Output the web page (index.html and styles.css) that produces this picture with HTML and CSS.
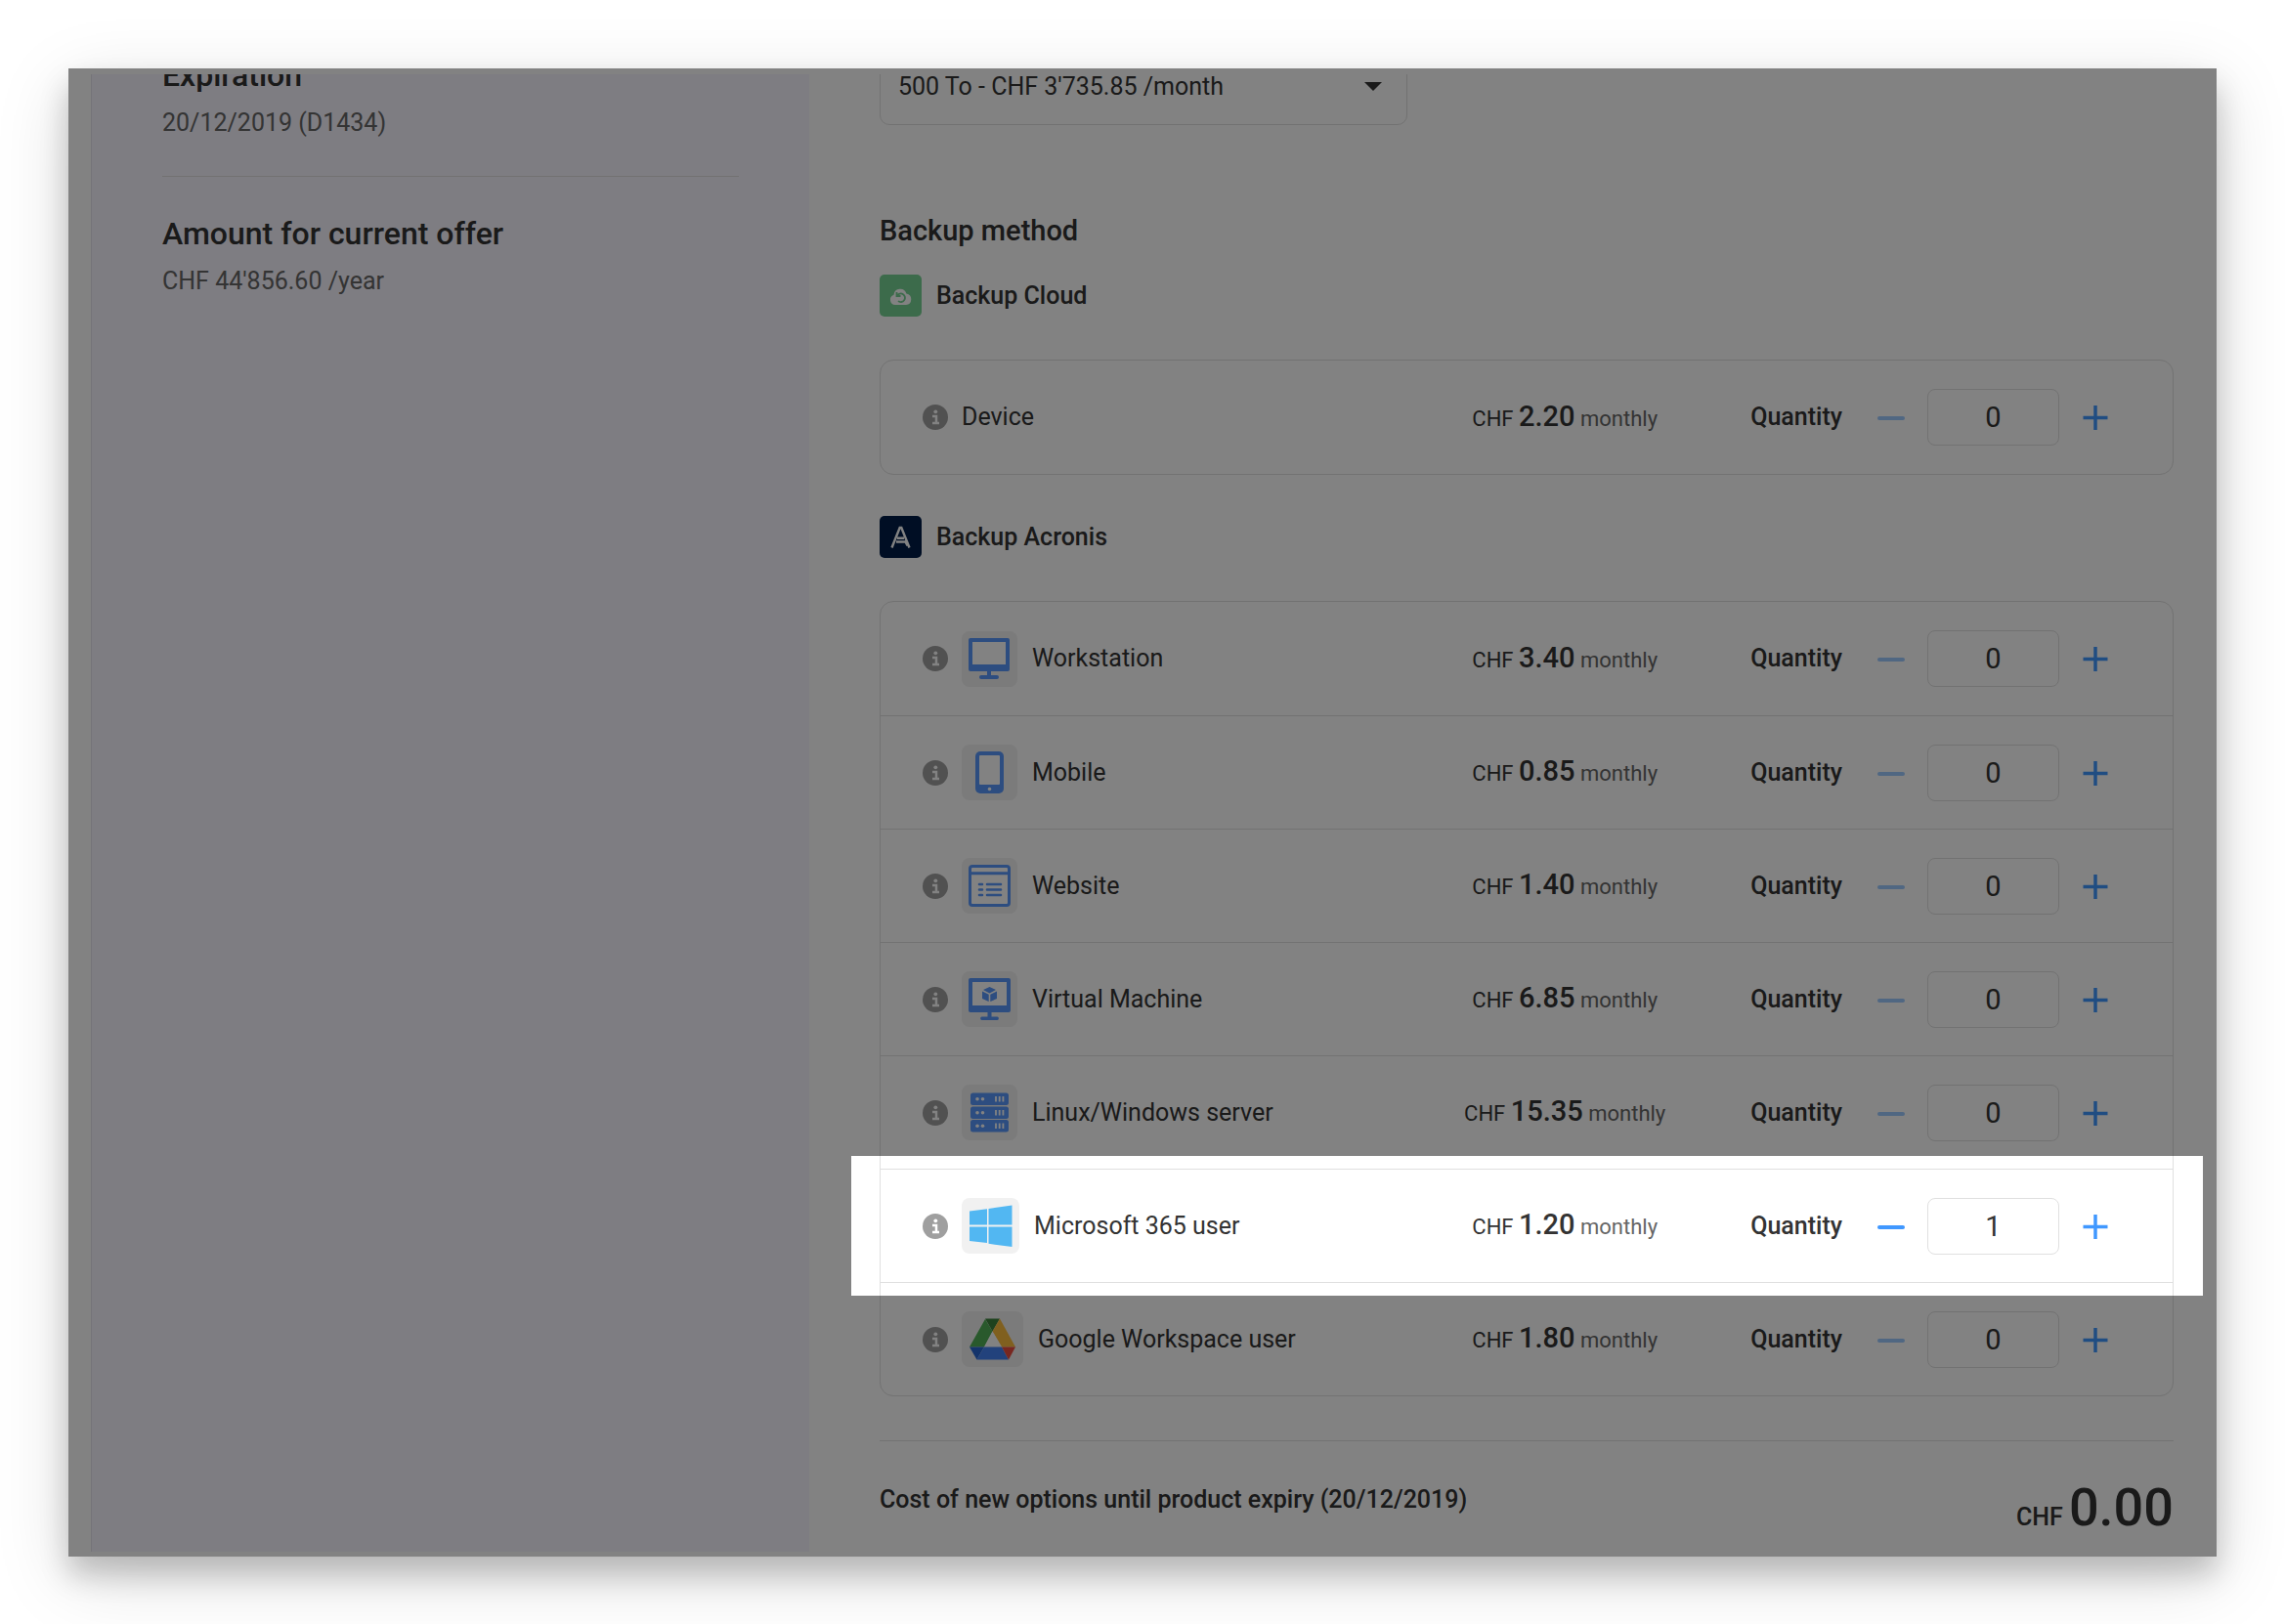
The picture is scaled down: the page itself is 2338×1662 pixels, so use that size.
FILE: index.html
```
<!DOCTYPE html>
<html lang="en">
  <head>
    <meta charset="UTF-8" />
    <meta name="viewport" content="width=device-width, initial-scale=1.0" />
    <title>Backup options</title>
    <link rel="stylesheet" href="styles.css">
  </head>
  <body>
    <div class="panel">
      <aside class="sidebar">
        <div class="cut cut-title">
          <h2>Expiration</h2>
        </div>
        <p>20/12/2019 (D1434)</p>
        <hr />
        <h2>Amount for current offer</h2>
        <p>CHF 44'856.60 /year</p>
      </aside>

      <main class="content">
        <div class="cut cut-select">
          <div class="select-wrap">
            <select class="storage" aria-label="Storage">
              <option>500 To - CHF 3'735.85 /month</option>
            </select>
            <svg class="caret" viewBox="0 0 18 9"><path d="M0 0h18L9 9z" /></svg>
          </div>
        </div>

        <h3 class="section-title">Backup method</h3>

        <h4 class="method">
          <svg viewBox="0 0 43 43">
            <rect width="43" height="43" rx="5" fill="#76d293" />
            <path d="M16 31a5.300 5.300 0 0 1-1.500-10.300 6.600 6.600 0 0 1 12.900-1.200 5.800 5.800 0 0 1-.4 11.500z" fill="#fff" />
            <path d="M18 21.500a4.300 4.300 0 1 1 1 5.600M17.500 18v4h4" fill="none" stroke="#76d293" stroke-width="1.800" />
          </svg>
          Backup Cloud
        </h4>
        <div class="options" id="cloud"></div>

        <h4 class="method">
          <svg viewBox="0 0 43 43">
            <rect width="43" height="43" rx="5" fill="#001d48" />
            <path d="M12.500 32.500L20.700 12h1.600l8.200 20.500M17 26.500h9.500l2 4M18 22.800h7" fill="none" stroke="#fff" stroke-width="2.400" />
          </svg>
          Backup Acronis
        </h4>
        <div class="options" id="acronis"></div>

        <footer class="total">
          <span class="total-label">Cost of new options until product expiry (20/12/2019)</span>
          <span class="total-price">CHF <strong>0.00</strong></span>
        </footer>
      </main>
    </div>

    <script src="script.js"></script>
  </body>
</html>
```
FILE: styles.css
```
* {
  box-sizing: border-box;
}

body {
  margin: 0;
  padding: 70px;
  background-color: #fff;
  color: #333;
  font-family: Roboto, Arial, sans-serif;
  font-size: 25px;
  line-height: 32px;
}

h2,
h3,
h4,
p {
  margin: 0;
  font-weight: 500;
}

.panel {
  position: relative;
  display: flex;
  overflow: hidden;
  padding: 6px 44px 5px 23px;
  background-color: #fff;
  box-shadow: 0 18px 28px rgba(0, 0, 0, 0.2), 0 20px 70px rgba(0, 0, 0, 0.15);
}

/* Sidebar */
.sidebar {
  flex: 0 0 735px;
  padding: 0 72px;
  border-left: 1px solid #e6e4ee;
  background-color: #f7f5ff;
}

.sidebar h2 {
  font-size: 32px;
  line-height: 40px;
}

.sidebar p {
  margin-top: 13px;
  color: #666;
  font-weight: 400;
}

.sidebar hr {
  margin: 38px 0;
  border: 0;
  border-top: 1px solid #e0e0e0;
}

/* Blocks scrolled partly under the top edge */
.cut {
  display: flex;
  align-items: flex-end;
  overflow: hidden;
}

.cut-title {
  height: 21px;
}

.cut-select {
  height: 52px;
}

/* Main column */
.content {
  flex: 1;
  margin-left: 72px;
}

.select-wrap {
  position: relative;
  flex: 0 0 540px;
}

.storage {
  width: 100%;
  height: 78px;
  padding: 0 18px;
  appearance: none;
  border: 1px solid #e0e0e0;
  border-radius: 10px;
  background-color: #fff;
  color: #333;
  font: inherit;
}

.caret {
  position: absolute;
  right: 26px;
  bottom: 35px;
  width: 18px;
  height: 9px;
  fill: #333;
}

.section-title {
  margin-top: 90px;
  font-size: 29px;
  line-height: 36px;
}

.method {
  display: flex;
  align-items: center;
  gap: 15px;
  margin: 27px 0 44px;
}

.method svg {
  width: 43px;
  height: 43px;
}

.options {
  border: 1px solid #e0e0e0;
  border-radius: 14px;
}

.options + .method {
  margin-top: 42px;
}

/* Option rows */
.option {
  position: relative;
  display: flex;
  align-items: center;
  height: 116px;
  padding: 0 63px 0 43px;
}

.option + .option {
  border-top: 1px solid #e0e0e0;
}

.info {
  width: 26px;
  height: 26px;
  margin-right: 14px;
}

.tile {
  display: flex;
  margin-right: 15px;
  padding: 7px;
  border-radius: 8px;
  background-color: #f1f1f1;
}

.tile svg {
  height: 43px;
}

.name {
  flex: 1;
}

.price {
  width: 240px;
  margin-right: 70px;
  font-size: 22px;
  text-align: center;
  white-space: nowrap;
}

.price strong {
  font-size: 29px;
  font-weight: 500;
}

.price small {
  color: #666;
  font-size: 22px;
}

.quantity {
  margin-right: 34px;
  font-weight: 500;
}

.step {
  display: flex;
  padding: 0;
  border: 0;
  background: none;
  color: #4098ff;
  cursor: pointer;
}

.step:disabled {
  opacity: 0.5;
}

.step svg {
  width: 32px;
  height: 32px;
}

.amount {
  width: 135px;
  height: 58px;
  margin: 0 21px;
  padding: 0;
  border: 1px solid #e0e0e0;
  border-radius: 8px;
  background-color: #fff;
  color: #333;
  font: inherit;
  font-size: 29px;
  text-align: center;
}

/* Spotlight: everything around the active row is dimmed */
.option.active::after {
  content: "";
  position: absolute;
  z-index: 1;
  inset: -14px -31px -14px -30px;
  box-shadow: 0 0 0 3000px rgba(0, 0, 0, 0.49);
  pointer-events: none;
}

/* Total */
.total {
  display: flex;
  justify-content: space-between;
  align-items: flex-start;
  margin-top: 45px;
  padding: 42px 0 9px;
  border-top: 1px solid #e0e0e0;
  font-weight: 500;
}

.total-label {
  line-height: 36px;
}

.total-price {
  line-height: 52px;
}

.total-price strong {
  font-size: 54px;
  font-weight: 500;
}
```
FILE: script.js
```
const icons = {
  workstation: `<svg viewBox="0 0 43 43" fill="#5897fb">
    <rect width="42" height="34" rx="2" />
    <rect x="4" y="4" width="34" height="23" fill="#fff" />
    <path d="M19 34h4v4h6a2 2 0 0 1 0 4H13a2 2 0 0 1 0-4h6z" />
  </svg>`,
  mobile: `<svg viewBox="0 0 43 43">
    <rect x="7" width="29" height="43" rx="5" fill="#5897fb" />
    <rect x="11" y="4" width="21" height="30" rx="1" fill="#fff" />
    <circle cx="21.500" cy="38.500" r="1.800" fill="#fff" />
  </svg>`,
  website: `<svg viewBox="0 0 43 43" fill="none" stroke="#5897fb" stroke-width="3">
    <rect x="1.500" y="1.500" width="40" height="40" rx="2.500" fill="#fff" />
    <path d="M1.500 8.700h40" />
    <path d="M11 20h3M19 20h14M11 25.500h3M19 25.500h14M11 31h3M19 31h14" stroke-width="2.600" stroke-linecap="round" />
  </svg>`,
  vm: `<svg viewBox="0 0 43 43" fill="#5897fb">
    <rect width="43" height="35" rx="2" />
    <rect x="4" y="4" width="35" height="24" fill="#fff" />
    <path d="M19.500 35h4v4.500h6a1.800 1.800 0 0 1 0 3.500h-16a1.800 1.800 0 0 1 0-3.500h6z" />
    <path d="M21.500 9l6.500 3-6.500 3.500-6.500-3.500zM14 13.500l6.700 3.300v7.200L14 21zM29 13.500l-6.700 3.300v7.200L29 21z" />
  </svg>`,
  server: `<svg viewBox="0 0 43 43">${[1.5, 15.5, 29]
    .map(
      (y) => `<g transform="translate(0 ${y})">
        <rect x="2" width="39" height="12.500" rx="2.500" fill="#5897fb" />
        <circle cx="9" cy="6.200" r="1.800" fill="#fff" />
        <circle cx="14.500" cy="6.200" r="1.800" fill="#fff" />
        <path d="M28 3.500v5.500M31.700 3.500v5.500M35.400 3.500v5.500" stroke="#fff" stroke-width="1.800" />
      </g>`
    )
    .join("")}</svg>`,
  windows: `<svg viewBox="0 0 45 43" fill="#52b7f2">
    <path d="M1 6.500l18-2.300V20.500H1zM20.500 4L44.500.500v20h-24zM1 22.500h18v16.500L1 37zM20.500 22.500h24v20.500l-24-3.200z" />
  </svg>`,
  drive: `<svg viewBox="0 0 49 43">
    <path d="M1 29.500L17 1l7.500 12.500L16 29.500z" fill="#51ae57" />
    <path d="M17 .500h15l-7.500 13z" fill="#3c823c" />
    <path d="M32 .500l16 29H34l-9.500-16z" fill="#fbbc3d" />
    <path d="M24.500 13.500l9.500 16H16z" fill="#fff" />
    <path d="M1 29.500h15L8.500 42.500z" fill="#2966d2" />
    <path d="M16 29.500h18l7 13H8.500z" fill="#4381f3" />
    <path d="M34 29.500h14l-7 13z" fill="#eb4e3f" />
  </svg>`,
};

const infoIcon = `<svg class="info" viewBox="0 0 26 26">
  <circle cx="13" cy="13" r="13" fill="#9f9f9f" />
  <circle cx="13.300" cy="7.300" r="1.900" fill="#fff" />
  <path d="M10 12h4v7M10 19h7" fill="none" stroke="#fff" stroke-width="2.500" />
</svg>`;

const cloud = [{ name: "Device", price: "2.20", quantity: 0 }];

const acronis = [
  { name: "Workstation", price: "3.40", quantity: 0, icon: "workstation" },
  { name: "Mobile", price: "0.85", quantity: 0, icon: "mobile" },
  { name: "Website", price: "1.40", quantity: 0, icon: "website" },
  { name: "Virtual Machine", price: "6.85", quantity: 0, icon: "vm" },
  { name: "Linux/Windows server", price: "15.35", quantity: 0, icon: "server" },
  { name: "Microsoft 365 user", price: "1.20", quantity: 1, icon: "windows", active: true },
  { name: "Google Workspace user", price: "1.80", quantity: 0, icon: "drive" },
];

// Build the markup of one option row
function renderOption(option, id) {
  const tile = option.icon ? `<span class="tile">${icons[option.icon]}</span>` : "";
  return `<div class="option${option.active ? " active" : ""}">
    ${infoIcon}
    ${tile}
    <span class="name">${option.name}</span>
    <span class="price">CHF <strong>${option.price}</strong> <small>monthly</small></span>
    <label class="quantity" for="${id}">Quantity</label>
    <button class="step minus" aria-label="Remove one"${option.quantity ? "" : " disabled"}>
      <svg viewBox="0 0 32 32"><path d="M4 17h24" stroke="currentColor" stroke-width="4" stroke-linecap="round" /></svg>
    </button>
    <input class="amount" type="text" id="${id}" value="${option.quantity}" />
    <button class="step plus" aria-label="Add one">
      <svg viewBox="0 0 32 32"><path d="M3.500 16.500h25M16 4v25" stroke="currentColor" stroke-width="3.500" /></svg>
    </button>
  </div>`;
}

function renderOptions(containerId, options) {
  document.getElementById(containerId).innerHTML = options
    .map((option, i) => renderOption(option, `${containerId}-${i}`))
    .join("");
}

renderOptions("cloud", cloud);
renderOptions("acronis", acronis);

// Step buttons change the quantity next to them
document.querySelectorAll(".option").forEach((row) => {
  const input = row.querySelector(".amount");
  const minus = row.querySelector(".minus");

  function change(delta) {
    input.value = Math.max(0, (parseInt(input.value) || 0) + delta);
    minus.disabled = input.value === "0";
  }

  minus.addEventListener("click", () => change(-1));
  row.querySelector(".plus").addEventListener("click", () => change(1));
});
```
